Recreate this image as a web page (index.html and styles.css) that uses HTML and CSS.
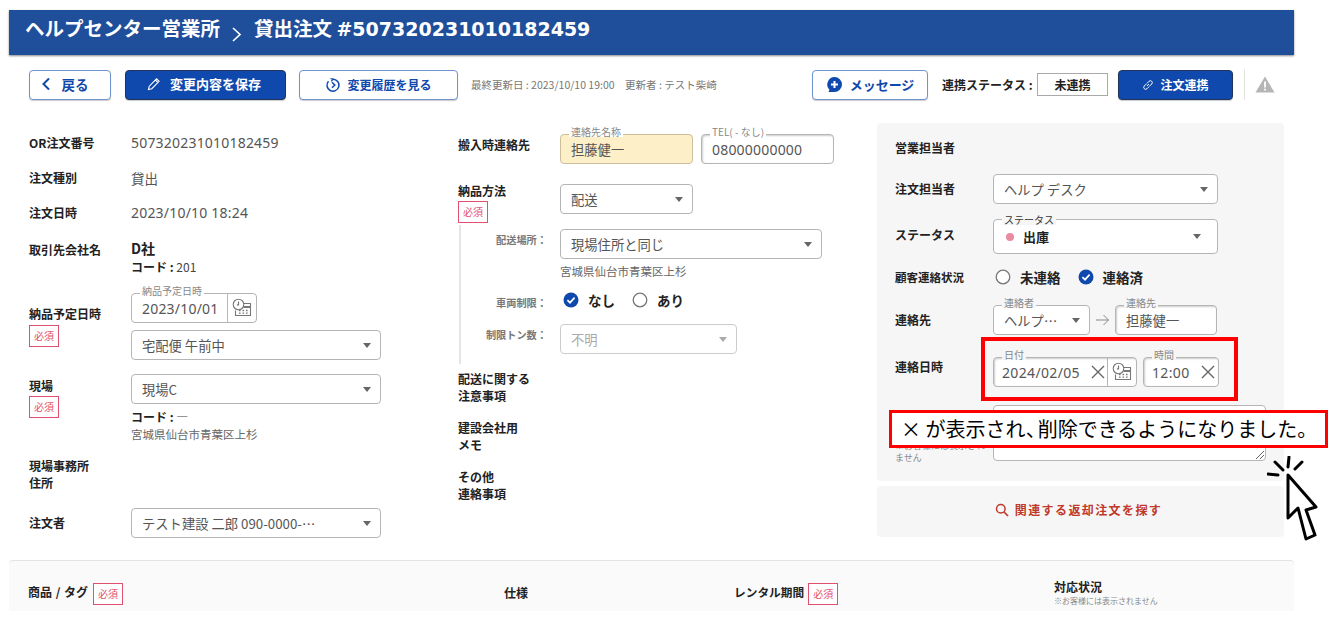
FILE: index.html
```html
<!DOCTYPE html>
<html lang="ja">
<head>
<meta charset="utf-8">
<title>貸出注文</title>
<link rel="stylesheet" href="styles.css">
</head>
<body>
<svg class="defs" width="0" height="0" aria-hidden="true">
  <symbol id="cal" viewBox="0 0 20 20">
    <circle cx="6.5" cy="6.5" r="5.3" fill="none" stroke="currentColor" stroke-width="1.1"/>
    <path d="M6.5 3.5v3.4h-1.6" fill="none" stroke="currentColor" stroke-width="1.2"/>
    <path d="M12 5.5h6.5v12H3.5v-5" fill="none" stroke="currentColor" stroke-width="1.1"/>
    <path d="M11.5 9h7" stroke="currentColor" stroke-width="2"/>
    <path d="M7 12.5h1.6M10.5 12.5h1.6M14 12.5h1.6M7 15.2h1.6M10.5 15.2h1.6M14 15.2h1.6" stroke="currentColor" stroke-width="1.3"/>
  </symbol>
  <symbol id="x" viewBox="0 0 14 14"><path d="M1 1l12 12M13 1L1 13" fill="none" stroke="currentColor" stroke-width="1.4"/></symbol>
  <symbol id="chk" viewBox="0 0 16 16"><circle cx="8" cy="8" r="7.5" fill="#1049ad"/><path d="M4.4 8.2l2.6 2.5 4.6-5" fill="none" stroke="#fff" stroke-width="1.7"/></symbol>
  <symbol id="rad" viewBox="0 0 16 16"><circle cx="8" cy="8" r="6.8" fill="#fff" stroke="#777" stroke-width="1.3"/></symbol>
</svg>
<div class="app">
  <header class="hdr">
    <span>ヘルプセンター営業所</span>
    <svg class="hdr-chev" width="12" height="16" viewBox="0 0 12 16"><path d="M2 2l7 6.500-7 6.500" fill="none" stroke="#fff" stroke-width="1.700"/></svg>
    <span>貸出注文 <span class="hdr-num">#507320231010182459</span></span>
  </header>

  <div class="toolbar">
    <button class="btn btn-back"><svg width="10" height="14" viewBox="0 0 10 14"><path d="M8 1.500L2.500 7 8 12.500" fill="none" stroke="#1049ad" stroke-width="2"/></svg>戻る</button>
    <button class="btn btn-save"><svg width="14" height="14" viewBox="0 0 14 14"><path d="M1.500 12.500l.8-3.300 7.200-7.400 2.600 2.500-7.300 7.400zM8.300 3l2.600 2.600" fill="none" stroke="#fff" stroke-width="1.100"/></svg>変更内容を保存</button>
    <button class="btn btn-hist"><svg width="16" height="16" viewBox="0 0 16 16"><path d="M8 2.200a6 6 0 1 1-4.500 2" fill="none" stroke="#1049ad" stroke-width="1.500"/><path d="M5.500 1.500L8 2.200 6.300 4.300" fill="none" stroke="#1049ad" stroke-width="1.200"/><path d="M7 5.300L9.800 8 7 10.700" fill="none" stroke="#1049ad" stroke-width="1.500"/></svg>変更履歴を見る</button>
    <span class="meta">最終更新日 : 2023/10/10 19:00　更新者 : テスト柴崎</span>
    <button class="btn btn-msg"><svg width="17" height="18" viewBox="0 0 17 18"><path d="M8.500 1a7.500 7.500 0 0 1 0 15H2.500l1-2.200A7.500 7.500 0 0 1 8.500 1z" fill="#1049ad"/><path d="M8.500 5v7M5 8.500h7" stroke="#fff" stroke-width="2"/></svg>メッセージ</button>
    <span class="st-label">連携ステータス :</span>
    <span class="st-box">未連携</span>
    <button class="btn btn-link"><svg width="12" height="12" viewBox="0 0 12 12"><path d="M5 7l2-2M4.500 4.800L2.300 7a1.700 1.700 0 0 0 2.700 2.700l2.200-2.200M4.800 4.500L7 2.300a1.700 1.700 0 0 1 2.700 2.700L7.500 7.200" fill="none" stroke="#fff" stroke-width="1"/></svg>注文連携</button>
    <span class="vline"></span>
    <svg class="warn" width="20" height="17" viewBox="0 0 20 17"><path d="M10 .500L19.500 16.500H.5z" fill="#b5b5b5"/><path d="M10 5.500v6M10 12.800v1.800" stroke="#fff" stroke-width="1.800"/></svg>
  </div>

  <main class="cols">
    <section class="col-left">
      <div class="row h35"><div class="lbl">OR注文番号</div><div class="val num">507320231010182459</div></div>
      <div class="row h35"><div class="lbl">注文種別</div><div class="val">貸出</div></div>
      <div class="row h35"><div class="lbl">注文日時</div><div class="val num">2023/10/10 18:24</div></div>
      <div class="row top company">
        <div class="lbl">取引先会社名</div>
        <div><div class="co-name">D社</div><div class="code"><b>コード : </b>201</div></div>
      </div>
      <div class="row top delivery">
        <div class="lbl lbl-del">納品予定日時<span class="req">必須</span></div>
        <div class="stack8">
          <div class="field w126 date"><span class="legend">納品予定日時</span><span class="grow num">2023/10/01</span><span class="calbtn"><svg width="20" height="20"><use href="#cal"/></svg></span></div>
          <div class="field select w250"><span class="grow">宅配便 午前中</span><i class="caret"></i></div>
        </div>
      </div>
      <div class="row top site">
        <div class="lbl lbl-site">現場<span class="req">必須</span></div>
        <div>
          <div class="field select w250"><span class="grow">現場C</span><i class="caret"></i></div>
          <div class="code code-site"><b>コード : </b>—</div>
          <div class="addr">宮城県仙台市青葉区上杉</div>
        </div>
      </div>
      <div class="row top office"><div class="lbl lh17">現場事務所<br>住所</div><div></div></div>
      <div class="row orderer">
        <div class="lbl">注文者</div>
        <div class="field select w250"><span class="grow">テスト建設 二郎 090-0000-⋯</span><i class="caret"></i></div>
      </div>
    </section>

    <section class="col-mid">
      <div class="mrow m-contact">
        <div class="lbl mlbl">搬入時連絡先</div>
        <div class="field w133 yellow"><span class="legend">連絡先名称</span><span class="grow">担藤健一</span></div>
        <div class="field w133 inset"><span class="legend">TEL( - なし)</span><span class="grow num">08000000000</span></div>
      </div>
      <div class="mrow m-method">
        <div class="lbl mlbl lbl-method">納品方法<span class="req">必須</span></div>
        <div class="field select w133"><span class="grow">配送</span><i class="caret"></i></div>
      </div>
      <div class="sub">
        <div class="srow s-place">
          <div class="slbl">配送場所：</div>
          <div>
            <div class="field select w262"><span class="grow">現場住所と同じ</span><i class="caret"></i></div>
            <div class="addr addr-mid">宮城県仙台市青葉区上杉</div>
          </div>
        </div>
        <div class="srow s-veh">
          <div class="slbl">車両制限：</div>
          <div class="radios"><svg width="16" height="16"><use href="#chk"/></svg><b>なし</b><svg class="r2" width="16" height="16"><use href="#rad"/></svg><b>あり</b></div>
        </div>
        <div class="srow s-ton">
          <div class="slbl">制限トン数：</div>
          <div class="field select w177 disabled"><span class="grow">不明</span><i class="caret"></i></div>
        </div>
      </div>
      <div class="notes">
        <div class="lbl lh17">配送に関する<br>注意事項</div>
        <div class="lbl lh17">建設会社用<br>メモ</div>
        <div class="lbl lh17">その他<br>連絡事項</div>
      </div>
    </section>

    <aside class="col-right">
      <div class="panel">
        <div class="lbl p-title">営業担当者</div>
        <div class="prow p1"><div class="lbl">注文担当者</div><div class="field select w225"><span class="grow">ヘルプ デスク</span><i class="caret"></i></div></div>
        <div class="prow p2"><div class="lbl">ステータス</div><div class="field select w225 tall"><span class="legend dark">ステータス</span><i class="dot"></i><b class="grow">出庫</b><i class="caret c2"></i></div></div>
        <div class="prow p3"><div class="lbl lbl-sm">顧客連絡状況</div><div class="radios rad-p"><svg width="16" height="16"><use href="#rad"/></svg><b>未連絡</b><svg class="r2" width="16" height="16"><use href="#chk"/></svg><b>連絡済</b></div></div>
        <div class="prow p4">
          <div class="lbl">連絡先</div>
          <div class="field select w97 tight"><span class="legend">連絡者</span><span class="grow">ヘルプ⋯</span><i class="caret"></i></div>
          <svg class="arrow" width="14" height="12" viewBox="0 0 14 12"><path d="M0 6h12.500M7.500 1l5 5-5 5" fill="none" stroke="#888" stroke-width="1"/></svg>
          <div class="field w102 inset"><span class="legend">連絡先</span><span class="grow">担藤健一</span></div>
        </div>
        <div class="prow p5">
          <div class="lbl">連絡日時</div>
          <div class="field w144 date inset"><span class="legend">日付</span><span class="grow num">2024/02/05</span><svg class="clr" width="14" height="14"><use href="#x"/></svg><span class="calbtn"><svg width="20" height="20"><use href="#cal"/></svg></span></div>
          <div class="field w76 inset time"><span class="legend">時間</span><span class="grow num">12:00</span><svg class="clr" width="14" height="14"><use href="#x"/></svg></div>
        </div>
        <div class="prow p6">
          <div class="lbl p6-lbl">対応メモ<small>※お客様には表示されません</small></div>
          <div class="area"><svg class="grip" width="11" height="11" viewBox="0 0 11 11"><path d="M10 2l-8 8M10 6l-4 4" stroke="#666" stroke-width="1"/></svg></div>
        </div>
      </div>
      <div class="panel2"><svg width="14" height="14" viewBox="0 0 14 14"><circle cx="5.800" cy="5.800" r="4.300" fill="none" stroke="#c0392b" stroke-width="1.500"/><path d="M9 9l4 4" stroke="#c0392b" stroke-width="1.700"/></svg>関連する返却注文を探す</div>
    </aside>
  </main>

  <section class="table-head">
    <div class="th th1">商品 / タグ<span class="req">必須</span></div>
    <div class="th th2">仕様</div>
    <div class="th th3">レンタル期間<span class="req">必須</span></div>
    <div class="th th4">対応状況<small>※お客様には表示されません</small></div>
  </section>
</div>

<div class="hl-box"></div>
<div class="callout">× が表示され<span class="tight">、</span>削除できるようになりました。</div>
<svg class="cursor" width="52" height="86" viewBox="0 0 52 86">
  <path d="M21 19V62L31 52 39 83 48 79 39 54 49 51Z" fill="#fff" stroke="#000" stroke-width="3" stroke-linejoin="round"/>
  <path d="M1 18l10 1M8 6l8 8M22 1l-1 10M35 6l-7 7" stroke="#000" stroke-width="3" stroke-linecap="round"/>
</svg>
</body>
</html>
```

FILE: styles.css
```css
* { box-sizing: border-box; }
html, body { margin: 0; padding: 0; }
body {
  width: 1338px; height: 630px; overflow: hidden; background: #fff; position: relative;
  font-family: "Noto Sans CJK JP", "Noto Sans", sans-serif; color: #555; font-size: 14px;
}
.defs { position: absolute; }
.app { margin: 10px 0 0 9px; width: 1285px; }
.hdr {
  height: 45px; background: #1f4e9b; color: #fff; font-size: 19.5px; font-weight: 700;
  display: flex; align-items: center; padding: 0 0 10px 16px; box-shadow: 0 1px 2px #888;
}
.hdr-chev { margin: 12px 11px 0 11px; }
.hdr-num { font-family: "DejaVu Sans", sans-serif; font-size: 19px; }

.toolbar { display: flex; align-items: center; height: 31px; margin-top: 14px; padding-left: 20px; }
.btn {
  height: 30px; border-radius: 4px; border: 1px solid #6f93cf; background: #fff; color: #1049ad;
  font: 700 12px "Noto Sans CJK JP", sans-serif; display: flex; align-items: center; justify-content: center; padding: 0;
  box-shadow: 0 1px 1px #ccc;
}
.btn-back { width: 82px; gap: 11px; font-size: 13.500px; padding: 0 11px 2px 0; }
.btn-save { width: 161px; margin-left: 14px; background: #1049ad; color: #fff; border-color: #22345c; gap: 9px; font-size: 13px; padding: 0 3px 2px 0; }
.btn-hist { width: 159px; margin-left: 13px; gap: 6px; }
.meta { width: 341px; margin-left: 13px; font-size: 10.500px; color: #777; white-space: nowrap; }
.btn-msg { width: 116px; font-size: 13px; gap: 7px; }
.st-label { margin-left: 14px; width: 95px; font-size: 12px; font-weight: 700; color: #222; white-space: nowrap; }
.st-box { width: 71px; height: 23px; border: 1px solid #aaa; font-size: 12px; font-weight: 700; color: #222; display: flex; align-items: center; justify-content: center; }
.btn-link { width: 115px; margin-left: 10px; background: #1049ad; color: #fff; border-color: #22345c; gap: 6px; }
.vline { width: 1px; height: 31px; background: #e4e4e4; margin-left: 11px; }
.warn { margin-left: 10px; }

.cols { display: flex; margin-top: 23px; padding-left: 20px; height: 434px; }
.col-left { width: 429px; }
.col-mid { width: 419px; }
.col-right { width: 407px; }

.lbl { font-size: 12px; font-weight: 700; color: #222; line-height: 16px; }
.lh17 { line-height: 17px; }
.val { font-size: 13.500px; color: #555; }
.num { font-family: "Noto Sans", "Noto Sans CJK JP", sans-serif; font-size: 14px; letter-spacing: .2px; }
.row { display: grid; grid-template-columns: 102px 1fr; align-items: center; width: 352px; }
.row.top { align-items: start; }
.h35 { height: 35px; }
.col-left > .row:first-child { margin-top: 2px; }
.company { margin-top: 12px; height: 37px; }
.co-name { font-size: 14px; font-weight: 700; color: #222; line-height: 20px; margin-top: -4px; }
.code { font-size: 12px; line-height: 18px; color: #444; }
.code b { color: #222; }
.delivery { margin-top: 14px; height: 67px; }
.lbl-del { margin-top: 13px; }
.req {
  display: flex; width: 30px; height: 22px; align-items: center; justify-content: center;
  border: 1px solid #e2506f; color: #e2506f; font-size: 10px; font-weight: 400; background: #fff;
}
.lbl-del .req, .lbl-method .req { margin-top: 3px; }
.lbl-site .req { margin-top: 2px; }
.stack8 { display: flex; flex-direction: column; gap: 7px; }
.site { margin-top: 14px; height: 66px; }
.lbl-site { margin-top: 4px; }
.code-site { margin-top: 4px; }
.addr { font-size: 11.500px; color: #666; line-height: 17px; }
.office { margin-top: 17px; height: 34px; }
.orderer { margin-top: 17px; height: 30px; }

.field {
  position: relative; height: 30px; border: 1px solid #b5b5b5; border-radius: 4px; background: #fff;
  display: flex; align-items: center; padding-left: 10px; font-size: 13.300px; color: #555; flex: none;
}
.grow { flex: 1; white-space: nowrap; overflow: hidden; }
.legend {
  position: absolute; top: -9px; left: 8px; padding: 0 2px; background: #fff; font-size: 10px; line-height: 11px;
  color: #888; white-space: nowrap;
}
.panel .legend { background: #f6f6f6; }
.legend.dark { color: #333; top: -6px; }
.caret { width: 0; height: 0; border: 4px solid transparent; border-top: 5px solid #666; border-bottom: 0; margin-right: 9px; flex: none; }
.c2 { margin-right: 16px; }
.w126 { width: 126px; } .w250 { width: 250px; } .w133 { width: 133px; } .w262 { width: 262px; }
.w177 { width: 177px; } .w225 { width: 225px; } .w97 { width: 97px; } .w102 { width: 102px; } .w144 { width: 144px; } .w76 { width: 76px; }
.date { padding-right: 0; }
.calbtn { width: 29px; height: 28px; border-left: 1px solid #b5b5b5; display: flex; align-items: center; justify-content: center; color: #777; flex: none; }
.clr { color: #666; margin-right: 3px; flex: none; }
.p5 .field { padding-left: 8px; }
.p5 .num { letter-spacing: .35px; }
.date .clr { margin-right: 2px; }
.yellow { background: #fdf0c8; border-color: #cdbf9a; }
.inset { box-shadow: inset 1px 1px 2px #ccc; }
.disabled { color: #aaa; border-color: #ccc; }
.disabled .caret { border-top-color: #aaa; }

.mrow { display: grid; grid-template-columns: 94px auto auto 1fr; column-gap: 8px; }
.mlbl { white-space: nowrap; }
.m-contact { margin-top: 11px; height: 30px; align-items: center; }
.m-contact .mlbl { margin-top: -8px; }
.m-method { margin-top: 20px; height: 41px; }
.lbl-method { margin-top: -1px; }
.lbl-method .req { margin-top: 2px; }
.sub { margin-left: 1px; border-left: 2px solid #e5e5e5; height: 139px; padding-top: 4px; width: 376px; }
.srow { display: grid; grid-template-columns: 86px 1fr; column-gap: 13px; }
.slbl { font-size: 10.200px; font-weight: 700; color: #777; text-align: right; white-space: nowrap; padding-top: 3px; }
.s-place { height: 61px; }
.addr-mid { margin-top: 4px; }
.radios { display: flex; align-items: center; height: 16px; }
.s-veh .radios { margin-left: 3px; }
.radios b { font-size: 13.500px; color: #222; margin-left: 9px; }
.r2 { margin-left: 17px; }
.s-veh { margin-top: 2px; height: 32px; }
.s-ton { height: 30px; }
.notes { display: flex; flex-direction: column; gap: 15px; margin-top: 6px; }

.panel { height: 358px; background: #f6f6f6; border-radius: 4px; padding: 17px 0 0 18px; overflow: hidden; }
.p-title { height: 16px; }
.prow { display: flex; align-items: center; }
.prow > .lbl:first-child { width: 98px; flex: none; }
.p1 { margin-top: 18px; }
.p2 { margin-top: 15px; }
.p2 > .lbl { margin-top: -4px; }
.tall { height: 35px; }
.dot { width: 8px; height: 8px; border-radius: 50%; background: #ea8ba0; margin: 0 9px 0 2px; }
.tall b { font-size: 13px; color: #222; }
.p3 { margin-top: 15px; height: 16px; }
.lbl-sm { font-size: 11.500px; }
.rad-p { margin-left: 2px; }
.p4 { margin-top: 20px; }
.arrow { margin: 0 5px 0 6px; }
.tight { padding-right: 0; }
.p5 { margin-top: 22px; }
.p5 .field + .field { margin-left: 6px; }
.p5 > .lbl { margin-top: -11px; }
.p6 { margin-top: 18px; align-items: flex-start; }
.p6-lbl { margin-top: 4px; }
.p6-lbl small { display: block; font-size: 9px; font-weight: 400; color: #888; line-height: 12px; margin-top: 15px; }
.area { width: 273px; height: 56px; border: 1px solid #b5b5b5; border-radius: 4px; background: #fff; position: relative; }
.grip { position: absolute; right: 0; bottom: 0; }
.panel2 {
  height: 51px; margin-top: 5px; background: #f6f6f6; border-radius: 4px; color: #c0392b; font-size: 12px; font-weight: 700;
  display: flex; align-items: center; justify-content: center; gap: 6px; letter-spacing: 1.400px; padding-bottom: 4px; padding-right: 4px;
}

.table-head {
  margin-top: 3px; height: 51px; background: #fafafa; border-top: 1px solid #e3e3e3; border-radius: 4px 4px 0 0;
  display: grid; grid-template-columns: 476px 230px 320px 1fr; padding-left: 19px;
}
.th { font-size: 12px; font-weight: 700; color: #222; display: flex; align-items: center; gap: 5px; padding-top: 10px; white-space: nowrap; }
.th1 { word-spacing: 1px; }
.th2 { padding-top: 13px; }
.th .req { margin-top: 5px; }
.th3 { font-size: 11.700px; gap: 4px; }
.th4 { flex-direction: column; align-items: flex-start; gap: 0; padding-top: 19px; line-height: 14px; }
.th4 small { font-size: 8px; font-weight: 400; color: #888; line-height: 12px; margin-top: 1px; }

.hl-box { position: absolute; left: 981px; top: 337px; width: 257px; height: 64px; border: 4px solid #f00; }
.callout {
  position: absolute; left: 889px; top: 410px; width: 439px; height: 38px; border: 3px solid #f00; background: #fff;
  color: #000; font-size: 20px; line-height: 32px; padding-left: 9px; white-space: nowrap;
}
.callout .tight { margin-right: -8px; }
.cursor { position: absolute; left: 1267px; top: 456px; }
```
